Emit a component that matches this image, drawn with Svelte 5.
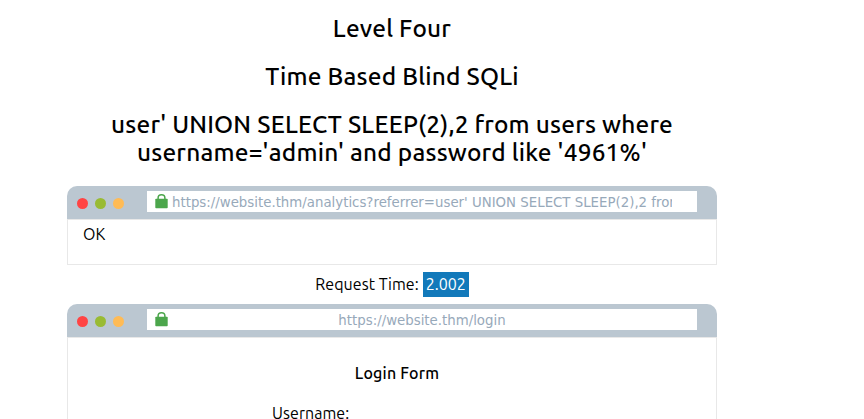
<script>
  const payload = "user' UNION SELECT SLEEP(2),2 from users where username='admin' and password like '4961%'";
</script>

{#snippet bar(url, centered)}
  <div class="bar">
    <span class="dot red"></span>
    <span class="dot green"></span>
    <span class="dot amber"></span>
    <div class="address">
      <svg class="lock" width="13" height="15" viewBox="0 0 13 15">
        <path d="M3.1 6V4a3.4 3.2 0 0 1 6.8 0V6" fill="none" stroke="#4ca64c" stroke-width="1.5" />
        <rect x="0.3" y="4.8" width="12.4" height="9.4" rx="0.8" fill="#4ca64c" />
      </svg>
      <div class="url" class:centered>{url}</div>
    </div>
  </div>
{/snippet}

<main>
  <h3>Level Four</h3>
  <h3>Time Based Blind SQLi</h3>
  <h3>user' UNION SELECT SLEEP(2),2 from users where<br />username='admin' and password like '4961%'</h3>

  <section class="browser">
    {@render bar(`https://website.thm/analytics?referrer=${payload}`, false)}
    <div class="content result">OK</div>
  </section>

  <div class="timing"><span class="caption">Request Time:</span><span class="time">2.002</span></div>

  <section class="browser">
    {@render bar('https://website.thm/login', true)}
    <div class="content login">
      <div class="title">Login Form</div>
      <label for="username">Username:</label>
    </div>
  </section>
</main>

<style>
  :global(body) { margin: 0; background: #fff; overflow: hidden; }
  main {
    box-sizing: border-box;
    width: 650px;
    height: 419px;
    margin-left: 67px;
    padding-top: 14px;
    overflow: hidden;
    color: #000;
    font: 16px/22px Ubuntu, "Noto Sans", sans-serif;
  }
  h3 {
    margin: 0 0 20px;
    text-align: center;
    font-size: 24.4px;
    line-height: 28px;
    font-weight: 500;
    letter-spacing: 0.2px;
    white-space: nowrap;
  }
  .bar {
    box-sizing: border-box;
    height: 33px;
    display: flex;
    align-items: center;
    gap: 7px;
    padding: 0 20px 0 10px;
    background: #bbc7d1;
    border-radius: 10px 10px 0 0;
  }
  .dot { width: 11px; height: 11px; border-radius: 50%; margin-top: 2px; flex: none; }
  .red { background: #ff4444; }
  .green { background: #99bb33; }
  .amber { background: #ffbb55; }
  .address {
    box-sizing: border-box;
    display: flex;
    align-items: center;
    flex: 1;
    min-width: 0;
    height: 21px;
    margin: -2px 0 0 16px;
    padding: 0 25px 0 8px;
    background: #fff;
  }
  .lock { flex: none; margin-top: -1px; }
  .url {
    flex: 1;
    min-width: 0;
    margin-left: 4px;
    padding-top: 2px;
    overflow: hidden;
    white-space: nowrap;
    color: #97a9ba;
    font: 13.333px/20px "DejaVu Sans", sans-serif;
  }
  .centered { text-align: center; }
  .content { box-sizing: border-box; border: 1px solid #e8e8e8; }
  .result { height: 46px; padding: 3px 15px; }
  .timing {
    display: flex;
    justify-content: center;
    gap: 4px;
    height: 25px;
    margin: 7px 0;
    line-height: 24px;
  }
  .caption { letter-spacing: 0.06px; }
  .time { width: 46px; height: 25px; text-align: center; background: #1279ba; color: #fff; }
  .login { height: 200px; padding-top: 24px; }
  .title { padding-left: 10px; text-align: center; font-weight: 500; letter-spacing: 0.2px; }
  label { display: block; margin: 18px 0 0 204px; letter-spacing: 0.06px; }
</style>
